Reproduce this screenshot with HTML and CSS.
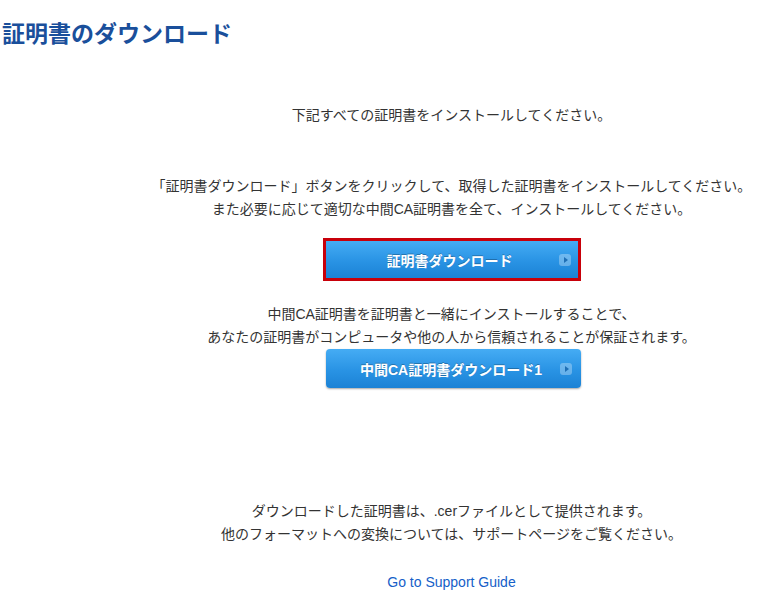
FILE: index.html
```html
<!DOCTYPE html>
<html lang="ja">
<head>
    <meta charset="UTF-8">
    <meta name="viewport" content="width=device-width, initial-scale=1.0">
    <title>証明書のダウンロード</title>
    <link rel="stylesheet" href="styles.css">
</head>
<body>
    <h1 class="page-title">証明書のダウンロード</h1>

    <div class="content">
        <p class="lead">下記すべての証明書をインストールしてください。</p>

        <p class="note">「証明書ダウンロード」ボタンをクリックして、取得した証明書をインストールしてください。<br>
        また必要に応じて適切な中間CA証明書を全て、インストールしてください。</p>

        <!-- main certificate -->
        <a href="#cert" class="dl-btn dl-btn-main">
            <span class="dl-label">証明書ダウンロード</span>
            <span class="dl-icon"></span>
        </a>

        <p class="note note-ca">中間CA証明書を証明書と一緒にインストールすることで、<br>
        あなたの証明書がコンピュータや他の人から信頼されることが保証されます。</p>

        <!-- intermediate CA -->
        <a href="#ca1" class="dl-btn">
            <span class="dl-label">中間CA証明書ダウンロード1</span>
            <span class="dl-icon"></span>
        </a>

        <p class="note note-format">ダウンロードした証明書は、.cerファイルとして提供されます。<br>
        他のフォーマットへの変換については、サポートページをご覧ください。</p>

        <a href="#support" class="support-link">Go to Support Guide</a>
    </div>
</body>
</html>
```

FILE: styles.css
```css
body {
    font-family: "Liberation Sans", Arial, "Noto Sans CJK JP", sans-serif;
    margin: 0;
    padding: 0;
    background-color: #fff;
    color: #333;
}

.page-title {
    font-size: 23px;
    font-weight: bold;
    color: #1a4f9b;
    line-height: 32px;
    margin: 18px 0 0;
    padding-left: 2px;
}

.content {
    display: flex;
    flex-direction: column;
    align-items: center;
    padding-left: 140px;
    text-align: center;
}

.content p {
    font-size: 14px;
    line-height: 23px;
    margin: 0;
}

.lead {
    margin-top: 54px !important;
}

.note {
    margin-top: 48px !important;
}

.note-ca {
    margin-top: 22px !important;
}

.note-format {
    margin-top: 112px !important;
}

/* blue download buttons */
.dl-btn {
    position: relative;
    display: flex;
    align-items: center;
    justify-content: center;
    box-sizing: border-box;
    width: 255px;
    height: 39px;
    margin-left: 3px;
    text-decoration: none;
    color: #fff;
    font-size: 14px;
    font-weight: bold;
    border-radius: 4px;
    background: linear-gradient(#45acf4, #2993e4 55%, #1b82d5);
    box-shadow: 0 1px 2px rgba(0, 0, 0, 0.35);
    text-shadow: 0 -1px 0 rgba(0, 0, 0, 0.25);
}

.dl-btn-main {
    width: 258px;
    height: 43px;
    margin: 17px 0 0;
    border: 3px solid #c8000a;
    border-radius: 0;
    box-shadow: none;
}

.dl-label {
    margin-right: 4px;
}

.dl-icon {
    position: absolute;
    right: 9px;
    top: 50%;
    width: 12px;
    height: 12px;
    margin-top: -6px;
    border-radius: 3px;
    background-color: rgba(255, 255, 255, 0.3);
}

.dl-icon::after {
    content: "";
    position: absolute;
    left: 5px;
    top: 3px;
    border-left: 4px solid #1f6fb5;
    border-top: 3px solid transparent;
    border-bottom: 3px solid transparent;
}

.dl-btn-main .dl-icon {
    right: 7px;
}

.support-link {
    margin-top: 25px;
    font-size: 14px;
    line-height: 23px;
    color: #1560c8;
    text-decoration: none;
}
```
